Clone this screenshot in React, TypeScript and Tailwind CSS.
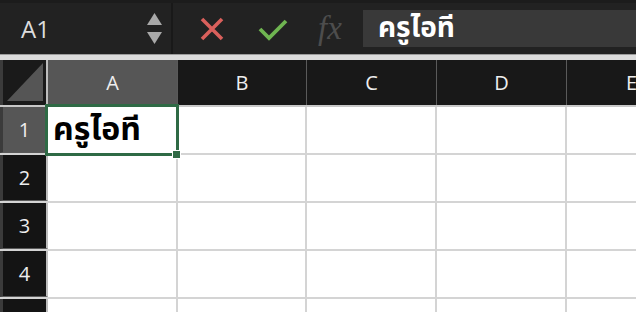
import React from 'react';

const COLS = [
  { label: 'A', width: 130 },
  { label: 'B', width: 129 },
  { label: 'C', width: 130 },
  { label: 'D', width: 130 },
  { label: 'E', width: 130 },
];

const ROWS = ['1', '2', '3', '4', ''];

const THAI = "font-['Noto_Sans_Thai','Tahoma','Noto_Sans',sans-serif]";

export default function App() {
  return (
    <div className="w-[636px] h-[312px] overflow-hidden bg-white font-['Open_Sans','Liberation_Sans',sans-serif] select-none">
      {/* Formula bar */}
      <div className="h-[54px] bg-[#222222] border-t-[3px] border-[#1c1c1c] flex items-stretch">
        <div className="w-[171px] shrink-0 flex items-center justify-between pl-[21px] pr-[9px]">
          <span className="text-[24px] text-[#dddddd] leading-none">A1</span>
          <div className="flex flex-col gap-[7px]">
            <svg width="15" height="12" viewBox="0 0 15 12"><path d="M7.5 0 L15 12 L0 12 Z" fill="#a9a9a9" /></svg>
            <svg width="15" height="12" viewBox="0 0 15 12"><path d="M0 0 L15 0 L7.5 12 Z" fill="#a9a9a9" /></svg>
          </div>
        </div>
        <div className="w-[2px] shrink-0 bg-[#191919]" />
        <div className="flex items-center pl-[27px] w-[190px] shrink-0">
          <svg width="24" height="24" viewBox="0 0 24 24" className="mt-[1px]">
            <path d="M2 2 L22 22 M22 2 L2 22" stroke="#d9605c" strokeWidth="3.6" />
          </svg>
          <svg width="30" height="24" viewBox="0 0 30 24" className="ml-[34px]">
            <path d="M2 12 L11 21 L28 4" stroke="#6fb551" strokeWidth="3.8" fill="none" />
          </svg>
          <span className="ml-[30px] text-[33px] italic text-[#4d4d4d] font-['Liberation_Serif',serif] leading-none">fx</span>
        </div>
        <div className="flex-1 my-[7px] bg-[#393939] flex items-center pl-[15px]">
          <span className={`${THAI} text-[28px] font-bold text-white leading-none`}>ครูไอที</span>
        </div>
      </div>
      <div className="h-[6px] bg-[#dcdcdc] border-t border-[#9c9c9c]" />

      {/* Grid */}
      <div className="relative">
        <div className="flex h-[47px] border-b-2 border-[#c8c8c8]">
          <div className="w-[48px] shrink-0 bg-[#1a1a1a] border-l-[3px] border-[#3b3b3b] border-r-2 border-r-[#bdbdbd] flex items-end justify-end pr-[3px] pb-[4px]">
            <svg width="36" height="38" viewBox="0 0 36 38"><path d="M36 0 L36 38 L0 38 Z" fill="#555555" /></svg>
          </div>
          {COLS.map((c, i) => (
            <div
              key={c.label}
              style={{ width: c.width }}
              className={`shrink-0 flex items-center justify-center text-[20px] text-[#eeeeee] border-r border-[#5a5a5a] ${i === 0 ? 'bg-[#565656]' : 'bg-[#181818]'}`}
            >
              {c.label}
            </div>
          ))}
        </div>
        {ROWS.map((r, ri) => (
          <div key={ri} className="flex h-[48px] border-b-2 border-[#d4d4d4]">
            <div
              className={`w-[48px] shrink-0 border-l-[3px] border-[#3b3b3b] border-r-2 border-r-[#bdbdbd] border-b border-b-[#5a5a5a] flex items-center justify-center text-[20px] text-[#eeeeee] ${ri === 0 ? 'bg-[#565656]' : 'bg-[#141414]'}`}
            >
              {r}
            </div>
            {COLS.map((c) => (
              <div key={c.label} style={{ width: c.width }} className="shrink-0 border-r-2 border-[#d4d4d4] flex items-center pl-[5px]">
                {ri === 0 && c.label === 'A' && (
                  <span className={`${THAI} text-[32px] font-bold text-black leading-none`}>ครูไอที</span>
                )}
              </div>
            ))}
          </div>
        ))}
        {/* Selection */}
        <div className="absolute left-[45px] top-[44px] w-[134px] h-[52px] border-[3px] border-[#2f6a45] pointer-events-none" />
        <div className="absolute left-[172px] top-[90px] w-[9px] h-[9px] bg-[#2f6a45] border border-white" />
      </div>
    </div>
  );
}
